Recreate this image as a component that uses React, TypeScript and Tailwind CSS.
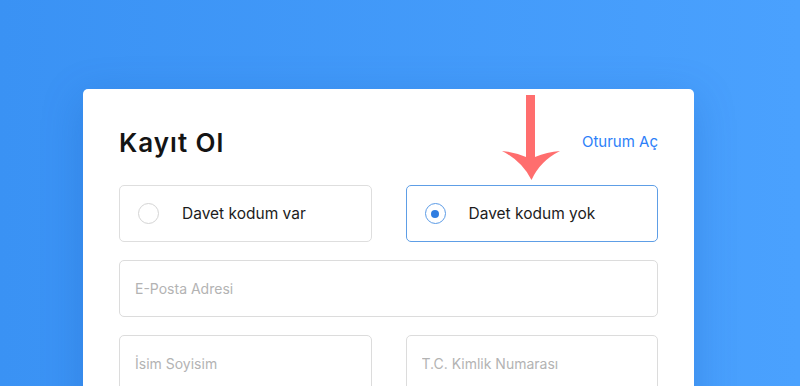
import { useState } from "react";

function Radio({ checked }: { checked: boolean }) {
  return (
    <span
      className={
        "flex h-[21px] w-[21px] shrink-0 items-center justify-center rounded-full border " +
        (checked ? "border-[#5b9be6]" : "border-[#d4d4d4]")
      }
    >
      {checked && <span className="h-[8px] w-[8px] rounded-full bg-[#2f7de1]" />}
    </span>
  );
}

function ChoiceBox({ label, checked, onClick }: { label: string; checked: boolean; onClick: () => void }) {
  return (
    <div
      onClick={onClick}
      className={
        "flex h-[57px] cursor-pointer items-center gap-[23px] rounded-[5px] border bg-white pl-[18px] " +
        (checked ? "border-[#5e9ee6]" : "border-[#dedede]")
      }
    >
      <Radio checked={checked} />
      <span className="text-[15.5px] text-[#1c1c1c]">{label}</span>
    </div>
  );
}

function Field({ placeholder }: { placeholder: string }) {
  return (
    <input
      placeholder={placeholder}
      className="h-[57px] w-full rounded-[5px] border border-[#dcdcdc] bg-white px-[15px] text-[14px] text-[#1c1c1c] placeholder-[#b3b3b3] outline-none"
    />
  );
}

function Arrow() {
  return (
    <svg className="absolute left-[419px] top-[6px]" width="58" height="86" viewBox="0 0 58 86">
      <path
        d="M24 0 H33 V62 Q45 57 58 56 Q38 66 29.5 85 Q20 66 0 56 Q12 57 24 62 Z"
        fill="#ff6e6e"
      />
    </svg>
  );
}

export default function App() {
  const [invite, setInvite] = useState(false);

  return (
    <div className="h-[386px] w-[800px] overflow-hidden bg-gradient-to-r from-[#3a92f4] to-[#4aa1fe] pl-[83px] pt-[89px] font-['Inter',sans-serif]">
      <div className="relative w-[611px] rounded-[5px] bg-white px-[36px] pb-[40px] pt-[38px] shadow-[0_10px_40px_rgba(20,80,170,0.25)]">
        <Arrow />
        <div className="flex h-[30px] items-center justify-between">
          <h1 className="text-[26px] font-semibold tracking-[1px] text-[#141414]">Kayıt Ol</h1>
          <a className="text-[15px] text-[#2d7ff9]">Oturum Aç</a>
        </div>

        <div className="mt-[28px] grid grid-cols-2 gap-x-[34px]">
          <ChoiceBox label="Davet kodum var" checked={invite} onClick={() => setInvite(true)} />
          <ChoiceBox label="Davet kodum yok" checked={!invite} onClick={() => setInvite(false)} />
        </div>

        <div className="mt-[18px] flex flex-col gap-[18px]">
          <Field placeholder="E-Posta Adresi" />
          <div className="grid grid-cols-2 gap-x-[34px]">
            <Field placeholder="İsim Soyisim" />
            <Field placeholder="T.C. Kimlik Numarası" />
          </div>
        </div>
      </div>
    </div>
  );
}
